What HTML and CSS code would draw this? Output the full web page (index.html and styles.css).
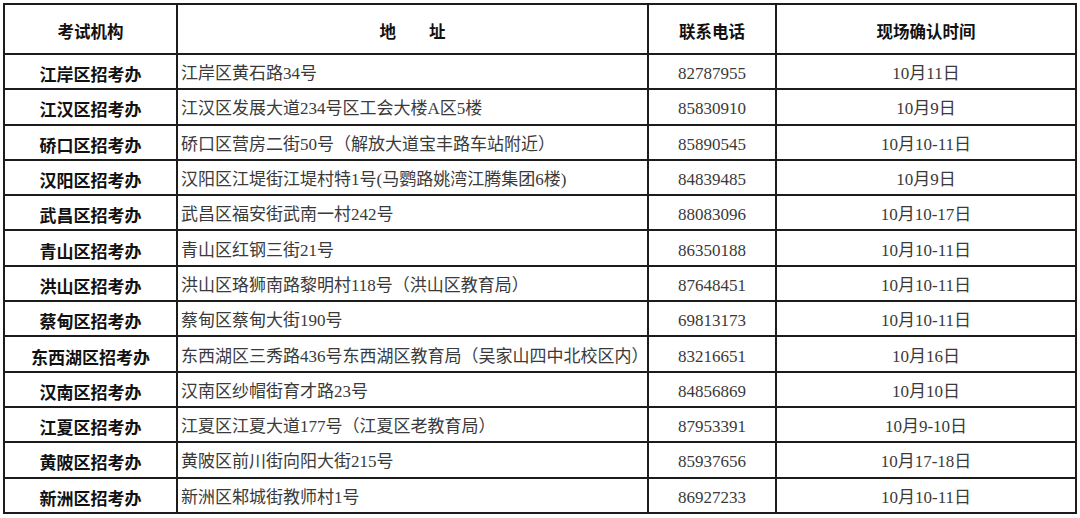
FILE: index.html
```html
<!DOCTYPE html>
<html lang="zh-CN">
<head>
<meta charset="utf-8">
<link rel="stylesheet" href="styles.css">
</head>
<body>
<table class="sched">
  <colgroup>
    <col class="c-org"><col class="c-addr"><col class="c-tel"><col class="c-date">
  </colgroup>
  <thead>
    <tr class="head"><th>考试机构</th><th>地　　址</th><th>联系电话</th><th>现场确认时间</th></tr>
  </thead>
  <tbody>
    <tr><td class="org">江岸区招考办</td><td class="addr">江岸区黄石路34号</td><td class="num">82787955</td><td class="num">10月11日</td></tr>
    <tr><td class="org">江汉区招考办</td><td class="addr">江汉区发展大道234号区工会大楼A区5楼</td><td class="num">85830910</td><td class="num">10月9日</td></tr>
    <tr><td class="org">硚口区招考办</td><td class="addr">硚口区营房二街50号（解放大道宝丰路车站附近）</td><td class="num">85890545</td><td class="num">10月10-11日</td></tr>
    <tr><td class="org">汉阳区招考办</td><td class="addr">汉阳区江堤街江堤村特1号(马鹦路姚湾江腾集团6楼)</td><td class="num">84839485</td><td class="num">10月9日</td></tr>
    <tr><td class="org">武昌区招考办</td><td class="addr">武昌区福安街武南一村242号</td><td class="num">88083096</td><td class="num">10月10-17日</td></tr>
    <tr><td class="org">青山区招考办</td><td class="addr">青山区红钢三街21号</td><td class="num">86350188</td><td class="num">10月10-11日</td></tr>
    <tr><td class="org">洪山区招考办</td><td class="addr">洪山区珞狮南路黎明村118号（洪山区教育局）</td><td class="num">87648451</td><td class="num">10月10-11日</td></tr>
    <tr><td class="org">蔡甸区招考办</td><td class="addr">蔡甸区蔡甸大街190号</td><td class="num">69813173</td><td class="num">10月10-11日</td></tr>
    <tr><td class="org">东西湖区招考办</td><td class="addr">东西湖区三秀路436号东西湖区教育局（吴家山四中北校区内）</td><td class="num">83216651</td><td class="num">10月16日</td></tr>
    <tr><td class="org">汉南区招考办</td><td class="addr">汉南区纱帽街育才路23号</td><td class="num">84856869</td><td class="num">10月10日</td></tr>
    <tr><td class="org">江夏区招考办</td><td class="addr">江夏区江夏大道177号（江夏区老教育局）</td><td class="num">87953391</td><td class="num">10月9-10日</td></tr>
    <tr><td class="org">黄陂区招考办</td><td class="addr">黄陂区前川街向阳大街215号</td><td class="num">85937656</td><td class="num">10月17-18日</td></tr>
    <tr><td class="org">新洲区招考办</td><td class="addr">新洲区邾城街教师村1号</td><td class="num">86927233</td><td class="num">10月10-11日</td></tr>
  </tbody>
</table>
</body>
</html>
```
FILE: styles.css
```css
html, body {
  margin: 0;
  padding: 0;
  background: #fff;
}
body {
  padding: 3px 0 0 3px;
}
.sched {
  border-collapse: collapse;
  table-layout: fixed;
  width: 1072px;
  font-family: "Liberation Serif", "Noto Sans CJK SC", serif;
  color: #3a3a3a;
}
.c-org { width: 173px; }
.c-addr { width: 471px; }
.c-tel { width: 128px; }
.c-date { width: 300px; }
.sched tr { height: 35.3px; }
.sched tr.head { height: 50px; }
.sched th, .sched td {
  border: 2px solid #1c1c1c;
  padding: 5px 0 0 0;
  line-height: 18px;
  vertical-align: middle;
  white-space: nowrap;
  overflow: hidden;
}
.sched th {
  font-family: "Noto Sans CJK SC", sans-serif;
  font-weight: 700;
  font-size: 16.5px;
  color: #111;
  text-align: center;
  padding-top: 3px;
}
.sched td {
  font-size: 17px;
}
.sched td.org {
  font-family: "Noto Sans CJK SC", sans-serif;
  font-weight: 700;
  font-size: 17px;
  color: #111;
  text-align: center;
}
.sched td.addr {
  text-align: left;
  padding-left: 3px;
}
.sched td.num {
  text-align: center;
}
```
